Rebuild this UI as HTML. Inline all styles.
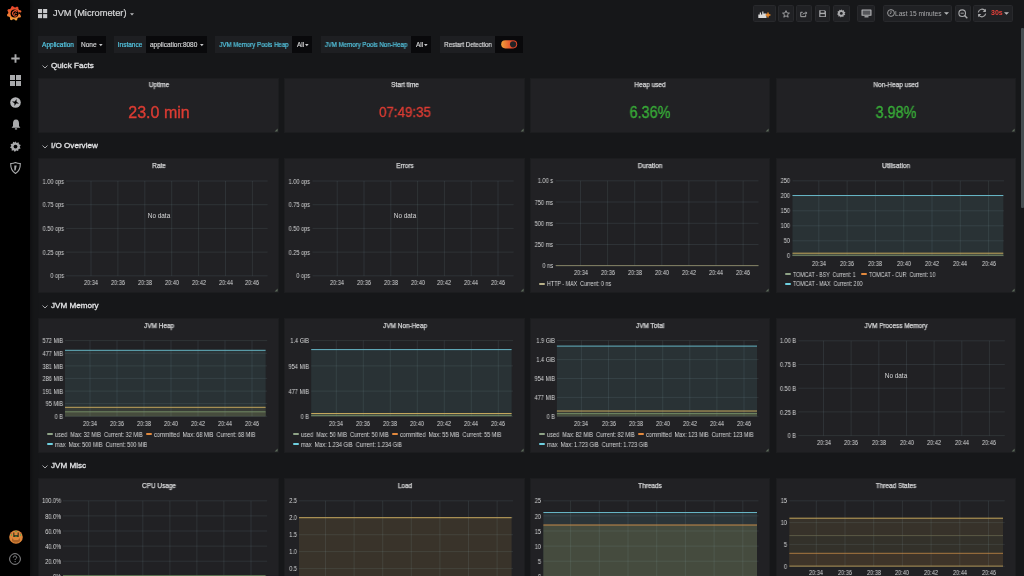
<!DOCTYPE html>
<html><head><meta charset="utf-8"><title>JVM (Micrometer)</title>
<style>
html,body{margin:0;padding:0;width:1024px;height:576px;overflow:hidden;background:#161719;font-family:"Liberation Sans",sans-serif;}
.t{position:absolute;white-space:nowrap;will-change:transform;}
.r{position:absolute;}
svg{position:absolute;overflow:visible;}
</style></head><body>
<div class="r" style="left:0px;top:0px;width:30px;height:576px;background:#000;box-shadow:0 0 6px rgba(0,0,0,0.6);z-index:2;"></div><svg style="left:0;top:0;z-index:3" width="30" height="30" viewBox="0 0 30 30">
<defs><linearGradient id="lg" x1="0" y1="0" x2="0" y2="1"><stop offset="0" stop-color="#e53e2b"/><stop offset="0.45" stop-color="#ee6a30"/><stop offset="1" stop-color="#f6a83f"/></linearGradient></defs>
<path fill="url(#lg)" d="M15.37,7.42 L17.03,6.46 L18.31,7.15 L18.44,9.06 L19.19,9.97 L21.04,10.47 L21.46,11.86 L20.20,13.30 L20.08,14.47 L21.04,16.13 L20.35,17.41 L18.44,17.54 L17.53,18.29 L17.03,20.14 L15.64,20.56 L14.20,19.30 L13.03,19.18 L11.37,20.14 L10.09,19.45 L9.96,17.54 L9.21,16.63 L7.36,16.13 L6.94,14.74 L8.20,13.30 L8.32,12.13 L7.36,10.47 L8.05,9.19 L9.96,9.06 L10.87,8.31 L11.37,6.46 L12.76,6.04 L14.20,7.30Z"/>
<circle cx="14.5" cy="13.5" r="3.9" fill="#000"/>
<path d="M18.7 12.100000000000001 L21.799999999999997 12.9 L18.4 14.5Z" fill="#000"/>
<path d="M17.2 11.700000000000001 A2.6 2.6 0 1 0 16.8 15.5" fill="none" stroke="#e8552e" stroke-width="1.1"/>
<path d="M16.599999999999998 13.9 A1.1 1.1 0 1 0 14.799999999999999 14.9" fill="none" stroke="#ec6a33" stroke-width="0.8"/>
</svg><svg style="left:10.5px;top:53.5px;z-index:3" width="9" height="9" viewBox="0 0 9 9"><path d="M4.5 0.3V8.7M0.3 4.5H8.7" stroke="#a9aaac" stroke-width="1.9"/></svg><svg style="left:10px;top:75px;z-index:3" width="11" height="11" viewBox="0 0 11 11"><rect x="0" y="0" width="5" height="5" fill="#a9aaac"/><rect x="6" y="0" width="5" height="5" fill="#a9aaac"/><rect x="0" y="6" width="5" height="5" fill="#a9aaac"/><rect x="6" y="6" width="5" height="5" fill="#a9aaac"/></svg><svg style="left:10px;top:96.7px;z-index:3" width="11" height="11" viewBox="0 0 11 11"><circle cx="5.5" cy="5.5" r="5.3" fill="#b4b5b7"/><path transform="rotate(15 5.5 5.5)" d="M5.5 1.8 L6.4 4.6 L9.2 5.5 L6.4 6.4 L5.5 9.2 L4.6 6.4 L1.8 5.5 L4.6 4.6Z" fill="#000"/></svg><svg style="left:10.5px;top:118.5px;z-index:3" width="10" height="11" viewBox="0 0 10 11"><path d="M5 0.5 C2.6 0.5 2 2.6 2 4.5 L2 7 L0.6 8.8 L9.4 8.8 L8 7 L8 4.5 C8 2.6 7.4 0.5 5 0.5Z" fill="#a9aaac"/><rect x="3.8" y="9.3" width="2.4" height="1.3" rx="0.6" fill="#a9aaac"/></svg><svg style="left:10px;top:140.8px;z-index:3" width="11" height="11" viewBox="0 0 11 11"><path d="M5.5 0.2 L6.6 1.9 L8.6 1.3 L8.9 3.3 L10.8 4.1 L9.7 5.8 L10.6 7.6 L8.6 8.1 L8.1 10.1 L6.2 9.5 L4.8 11 L3.7 9.3 L1.7 9.7 L1.7 7.6 L0 6.6 L1.3 5 L0.6 3.1 L2.6 2.7 L3.2 0.8 L5 1.5Z" fill="#a9aaac"/><circle cx="5.5" cy="5.6" r="1.9" fill="#000"/></svg><svg style="left:10px;top:162px;z-index:3" width="11" height="12" viewBox="0 0 11 12"><path d="M5.5 0.6 C3.6 1.4 2 1.6 0.7 1.5 C0.6 6.2 2 9.5 5.5 11.4 C9 9.5 10.4 6.2 10.3 1.5 C9 1.6 7.4 1.4 5.5 0.6Z" fill="none" stroke="#a9aaac" stroke-width="1.1"/><path d="M4.3 3.6 L6.7 3.6 L5.6 8.6 L4.3 8.6Z" fill="#a9aaac"/></svg><svg style="left:8.6px;top:530.2px;z-index:3" width="14" height="14" viewBox="0 0 14 14"><circle cx="7" cy="7" r="6.8" fill="#e0873a"/>
<path d="M4.2 2.5 L5.4 2.5 L5.4 5 L8.6 5 L8.6 2.5 L9.8 2.5 L9.8 7 L4.2 7Z" fill="#40371f"/><path d="M3 8 L5 10 L9 10 L11 8 L11 11 L9 12.4 L5 12.4 L3 11Z" fill="#8a4d1c" opacity="0.6"/>
<circle cx="7" cy="1.5" r="0.7" fill="#3fb050"/><circle cx="2.5" cy="5" r="0.7" fill="#3fb050"/><circle cx="11.5" cy="5" r="0.7" fill="#3fb050"/><circle cx="7" cy="6.2" r="0.7" fill="#3fb050"/><circle cx="2.5" cy="3" r="0.5" fill="#c04040"/><circle cx="11.5" cy="3" r="0.5" fill="#c04040"/></svg><svg style="left:9.4px;top:553.4px;z-index:3" width="12" height="12" viewBox="0 0 12 12"><circle cx="6" cy="6" r="5.4" fill="none" stroke="#9a9b9d" stroke-width="0.9"/><path d="M4.3 4.6 C4.3 3.5 5 3 6 3 C7 3 7.7 3.6 7.7 4.4 C7.7 5.5 6.1 5.6 6.1 7" fill="none" stroke="#9a9b9d" stroke-width="0.9"/><circle cx="6.1" cy="8.6" r="0.55" fill="#9a9b9d"/></svg><svg style="left:38px;top:8.6px" width="9.2" height="9.2" viewBox="0 0 9.2 9.2"><rect x="0" y="0" width="4.1" height="4.1" fill="#c9cacc"/><rect x="5.1" y="0" width="4.1" height="4.1" fill="#c9cacc"/><rect x="0" y="5.1" width="4.1" height="4.1" fill="#c9cacc"/><rect x="5.1" y="5.1" width="4.1" height="4.1" fill="#c9cacc"/></svg><div class="t" style="left:52.50px;top:8.05px;font-size:9.25px;line-height:11.10px;color:#d8d9da;font-weight:normal;-webkit-text-stroke:0.2px #d8d9da;">JVM (Micrometer)</div><svg style="left:129.5px;top:13px" width="4" height="3" viewBox="0 0 4 3"><path d="M0 0.3 L4 0.3 L2 2.6Z" fill="#b7b8ba"/></svg><div class="r" style="left:752.5px;top:5px;width:23.100000000000023px;height:16.5px;background:#202124;border:1px solid #28292c;box-sizing:border-box;border-radius:1.5px;"></div><svg style="left:757.5px;top:10px" width="13" height="8" viewBox="0 0 13 8"><path d="M0.3 8 L0.3 4.5 L1.8 4.5 L1.8 2.6 L3 2.6 L3 4.5 L4.2 4.5 L4.2 1.6 L5.4 1.6 L5.4 3.6 L8.5 3.6 L8.5 8Z" fill="#d8d8d8"/><path d="M10 2.6 V7.4 M7.6 5 H12.4" stroke="#f08c2a" stroke-width="1.4"/></svg><div class="r" style="left:777.8px;top:5px;width:16.100000000000023px;height:16.5px;background:#202124;border:1px solid #28292c;box-sizing:border-box;border-radius:1.5px;"></div><svg style="left:781.6px;top:9.6px" width="8" height="8" viewBox="0 0 10 10"><path d="M5 0.8 L6.2 3.7 L9.3 3.9 L6.9 5.9 L7.7 9 L5 7.3 L2.3 9 L3.1 5.9 L0.7 3.9 L3.8 3.7Z" fill="none" stroke="#a9aaac" stroke-width="1.1"/></svg><div class="r" style="left:796px;top:5px;width:16px;height:16.5px;background:#202124;border:1px solid #28292c;box-sizing:border-box;border-radius:1.5px;"></div><svg style="left:800px;top:9.8px" width="7.6" height="7.6" viewBox="0 0 10 10"><path d="M7.5 6 L7.5 8.8 L1 8.8 L1 3 L3.5 3" fill="none" stroke="#a9aaac" stroke-width="1.3"/><path d="M3.2 7 C3.5 4.5 5 3.3 7.5 3.3 L7.5 1.5 L9.6 3.8 L7.5 6 L7.5 4.6 C5.6 4.6 4.3 5.5 3.2 7Z" fill="#a9aaac"/></svg><div class="r" style="left:814.6px;top:5px;width:15.799999999999955px;height:16.5px;background:#202124;border:1px solid #28292c;box-sizing:border-box;border-radius:1.5px;"></div><svg style="left:818.9px;top:10px" width="7.2" height="7.2" viewBox="0 0 9 9"><path d="M0.3 0.3 H7.3 L8.7 1.7 V8.7 H0.3Z" fill="#a9aaac"/><rect x="2" y="1" width="4.8" height="2.4" fill="#202124"/><rect x="1.7" y="5.2" width="5.6" height="2.6" fill="#202124"/></svg><div class="r" style="left:832.5px;top:5px;width:17.200000000000045px;height:16.5px;background:#202124;border:1px solid #28292c;box-sizing:border-box;border-radius:1.5px;"></div><svg style="left:836.8px;top:9.3px" width="8.6" height="8.6" viewBox="0 0 11 11"><path d="M5.5 0.2 L6.6 1.9 L8.6 1.3 L8.9 3.3 L10.8 4.1 L9.7 5.8 L10.6 7.6 L8.6 8.1 L8.1 10.1 L6.2 9.5 L4.8 11 L3.7 9.3 L1.7 9.7 L1.7 7.6 L0 6.6 L1.3 5 L0.6 3.1 L2.6 2.7 L3.2 0.8 L5 1.5Z" fill="#a9aaac"/><circle cx="5.5" cy="5.6" r="1.8" fill="#202124"/></svg><div class="r" style="left:857px;top:5px;width:18px;height:16.5px;background:#202124;border:1px solid #28292c;box-sizing:border-box;border-radius:1.5px;"></div><svg style="left:860.5px;top:8.5px" width="11" height="9" viewBox="0 0 11 9"><rect x="0.5" y="0.5" width="10" height="6.3" rx="0.6" fill="#b5b6b8"/><rect x="1.6" y="1.5" width="7.8" height="4.3" fill="#55565a"/><rect x="3.5" y="7.2" width="4" height="1.2" fill="#b5b6b8"/></svg><div class="r" style="left:882.6px;top:5px;width:69.69999999999993px;height:16.5px;background:#202124;border:1px solid #28292c;box-sizing:border-box;border-radius:1.5px;"></div><svg style="left:886.5px;top:8.8px" width="8" height="8" viewBox="0 0 8 8"><circle cx="4" cy="4" r="3.4" fill="none" stroke="#a9aaac" stroke-width="0.9"/><path d="M4 1.8 V4.2 L2.6 5" fill="none" stroke="#a9aaac" stroke-width="0.8"/></svg><div class="t" style="left:894.50px;top:9.64px;font-size:6.6px;line-height:7.92px;color:#a9aaac;font-weight:normal;">Last 15 minutes</div><svg style="left:943.5px;top:12.3px" width="5" height="3" viewBox="0 0 5 3"><path d="M0 0.2 L5 0.2 L2.5 2.8Z" fill="#b7b8ba"/></svg><div class="r" style="left:954.5px;top:5px;width:16.5px;height:16.5px;background:#202124;border:1px solid #28292c;box-sizing:border-box;border-radius:1.5px;"></div><svg style="left:958px;top:8.5px" width="10" height="10" viewBox="0 0 10 10"><circle cx="4.2" cy="4.2" r="3.3" fill="none" stroke="#a9aaac" stroke-width="1.1"/><path d="M6.6 6.6 L9.3 9.3" stroke="#a9aaac" stroke-width="1.4"/><path d="M2.6 4.2 H5.8" stroke="#a9aaac" stroke-width="0.9"/></svg><div class="r" style="left:973.2px;top:5px;width:39.799999999999955px;height:16.5px;background:#202124;border:1px solid #28292c;box-sizing:border-box;border-radius:1.5px;"></div><svg style="left:977px;top:8.3px" width="10" height="10" viewBox="0 0 10 10"><path d="M1.3 4.3 A3.8 3.8 0 0 1 8.3 3" fill="none" stroke="#a9aaac" stroke-width="1.1"/><path d="M8.9 0.8 V4 H5.7Z" fill="#a9aaac"/><path d="M8.7 5.7 A3.8 3.8 0 0 1 1.7 7" fill="none" stroke="#a9aaac" stroke-width="1.1"/><path d="M1.1 9.2 V6 H4.3Z" fill="#a9aaac"/></svg><div class="t" style="left:990.50px;top:9.40px;font-size:7px;line-height:8.40px;color:#e8413a;font-weight:bold;">30s</div><svg style="left:1003.5px;top:12.3px" width="5" height="3" viewBox="0 0 5 3"><path d="M0 0.2 L5 0.2 L2.5 2.8Z" fill="#b7b8ba"/></svg><div class="r" style="left:1021px;top:28.3px;width:3px;height:180px;background:#454d50;border-radius:1px;"></div><div class="r" style="left:37.9px;top:36.2px;width:39.199999999999996px;height:16.7px;background:#1e1f22;"></div><div class="t" style="left:57.50px;top:40.70px;font-size:6.5px;line-height:7.80px;color:#55c8e4;font-weight:normal;transform:translateX(-50%) scaleX(1.0);transform-origin:center center;-webkit-text-stroke:0.2px #55c8e4;">Application</div><div class="r" style="left:77.1px;top:36.2px;width:28.900000000000006px;height:16.7px;background:#09090b;"></div><div class="t" style="left:81.30px;top:41.30px;font-size:6.5px;line-height:7.80px;color:#d8d9da;font-weight:normal;-webkit-text-stroke:0.15px #d8d9da;">None</div><svg style="left:98.8px;top:43.5px" width="3.6" height="2.4" viewBox="0 0 4 2.6"><path d="M0 0 L4 0 L2 2.5Z" fill="#c8c9cb"/></svg><div class="r" style="left:113.5px;top:36.2px;width:32.5px;height:16.7px;background:#1e1f22;"></div><div class="t" style="left:129.75px;top:40.70px;font-size:6.5px;line-height:7.80px;color:#55c8e4;font-weight:normal;transform:translateX(-50%) scaleX(1.0);transform-origin:center center;-webkit-text-stroke:0.2px #55c8e4;">Instance</div><div class="r" style="left:146px;top:36.2px;width:60.69999999999999px;height:16.7px;background:#09090b;"></div><div class="t" style="left:150.20px;top:41.30px;font-size:6.5px;line-height:7.80px;color:#d8d9da;font-weight:normal;-webkit-text-stroke:0.15px #d8d9da;">application:8080</div><svg style="left:199.5px;top:43.5px" width="3.6" height="2.4" viewBox="0 0 4 2.6"><path d="M0 0 L4 0 L2 2.5Z" fill="#c8c9cb"/></svg><div class="r" style="left:215px;top:36.2px;width:77.30000000000001px;height:16.7px;background:#1e1f22;"></div><div class="t" style="left:253.65px;top:40.70px;font-size:6.5px;line-height:7.80px;color:#55c8e4;font-weight:normal;transform:translateX(-50%) scaleX(0.94);transform-origin:center center;-webkit-text-stroke:0.2px #55c8e4;">JVM Memory Pools Heap</div><div class="r" style="left:292.3px;top:36.2px;width:20.19999999999999px;height:16.7px;background:#09090b;"></div><div class="t" style="left:296.50px;top:41.30px;font-size:6.5px;line-height:7.80px;color:#d8d9da;font-weight:normal;-webkit-text-stroke:0.15px #d8d9da;">All</div><svg style="left:305.3px;top:43.5px" width="3.6" height="2.4" viewBox="0 0 4 2.6"><path d="M0 0 L4 0 L2 2.5Z" fill="#c8c9cb"/></svg><div class="r" style="left:321.3px;top:36.2px;width:90.0px;height:16.7px;background:#1e1f22;"></div><div class="t" style="left:366.30px;top:40.70px;font-size:6.5px;line-height:7.80px;color:#55c8e4;font-weight:normal;transform:translateX(-50%) scaleX(0.94);transform-origin:center center;-webkit-text-stroke:0.2px #55c8e4;">JVM Memory Pools Non-Heap</div><div class="r" style="left:411.3px;top:36.2px;width:20.19999999999999px;height:16.7px;background:#09090b;"></div><div class="t" style="left:415.50px;top:41.30px;font-size:6.5px;line-height:7.80px;color:#d8d9da;font-weight:normal;-webkit-text-stroke:0.15px #d8d9da;">All</div><svg style="left:424.3px;top:43.5px" width="3.6" height="2.4" viewBox="0 0 4 2.6"><path d="M0 0 L4 0 L2 2.5Z" fill="#c8c9cb"/></svg><div class="r" style="left:440.3px;top:36.2px;width:54.89999999999998px;height:16.7px;background:#1e1f22;"></div><div class="t" style="left:467.75px;top:40.70px;font-size:6.5px;line-height:7.80px;color:#d8d9da;font-weight:normal;transform:translateX(-50%) scaleX(0.95);transform-origin:center center;-webkit-text-stroke:0.2px #d8d9da;">Restart Detection</div><div class="r" style="left:495.2px;top:36.2px;width:27.400000000000034px;height:16.7px;background:#09090b;"></div><svg style="left:500.8px;top:40.2px" width="16.4" height="8.6" viewBox="0 0 16.4 8.6"><defs><linearGradient id="tg" x1="0" y1="0" x2="1" y2="0"><stop offset="0" stop-color="#f0a03a"/><stop offset="0.7" stop-color="#e2452a"/></linearGradient></defs><rect x="0.2" y="0.2" width="16" height="8.2" rx="4.1" fill="url(#tg)"/><circle cx="12.1" cy="4.3" r="3.1" fill="#222326"/></svg><svg style="left:42px;top:64.5px" width="6" height="4" viewBox="0 0 6 4"><path d="M0.5 0.5 L3 3 L5.5 0.5" fill="none" stroke="#b7b8ba" stroke-width="0.9"/></svg><div class="t" style="left:51.00px;top:61.14px;font-size:8.1px;line-height:9.72px;color:#e3e4e6;font-weight:normal;-webkit-text-stroke:0.3px #e3e4e6;">Quick Facts</div><svg style="left:42px;top:144.5px" width="6" height="4" viewBox="0 0 6 4"><path d="M0.5 0.5 L3 3 L5.5 0.5" fill="none" stroke="#b7b8ba" stroke-width="0.9"/></svg><div class="t" style="left:51.00px;top:141.14px;font-size:8.1px;line-height:9.72px;color:#e3e4e6;font-weight:normal;-webkit-text-stroke:0.3px #e3e4e6;">I/O Overview</div><svg style="left:42px;top:304.5px" width="6" height="4" viewBox="0 0 6 4"><path d="M0.5 0.5 L3 3 L5.5 0.5" fill="none" stroke="#b7b8ba" stroke-width="0.9"/></svg><div class="t" style="left:51.00px;top:301.14px;font-size:8.1px;line-height:9.72px;color:#e3e4e6;font-weight:normal;-webkit-text-stroke:0.3px #e3e4e6;">JVM Memory</div><svg style="left:42px;top:464.5px" width="6" height="4" viewBox="0 0 6 4"><path d="M0.5 0.5 L3 3 L5.5 0.5" fill="none" stroke="#b7b8ba" stroke-width="0.9"/></svg><div class="t" style="left:51.00px;top:461.14px;font-size:8.1px;line-height:9.72px;color:#e3e4e6;font-weight:normal;-webkit-text-stroke:0.3px #e3e4e6;">JVM Misc</div><div class="r" style="left:38px;top:78px;width:241px;height:55px;background:#212124;box-sizing:border-box;border:1px solid #1c1d1f;"></div><svg style="left:274px;top:128px" width="4" height="4" viewBox="0 0 4 4"><path d="M3.6 0.6 L3.6 3.6 L0.6 3.6Z" fill="#5c6a5a"/></svg><div class="t" style="left:158.50px;top:81.42px;font-size:6.8px;line-height:8.16px;color:#d8d9da;font-weight:normal;transform:translateX(-50%) scaleX(0.95);transform-origin:center center;-webkit-text-stroke:0.25px #d8d9da;">Uptime</div><div class="t" style="left:158.50px;top:102.90px;font-size:16px;line-height:19.20px;color:#dc3c33;font-weight:normal;transform:translateX(-50%) scaleX(1.0);transform-origin:center center;-webkit-text-stroke:0.35px #dc3c33;">23.0 min</div><div class="r" style="left:284px;top:78px;width:241px;height:55px;background:#212124;box-sizing:border-box;border:1px solid #1c1d1f;"></div><svg style="left:520px;top:128px" width="4" height="4" viewBox="0 0 4 4"><path d="M3.6 0.6 L3.6 3.6 L0.6 3.6Z" fill="#5c6a5a"/></svg><div class="t" style="left:404.50px;top:81.42px;font-size:6.8px;line-height:8.16px;color:#d8d9da;font-weight:normal;transform:translateX(-50%) scaleX(0.95);transform-origin:center center;-webkit-text-stroke:0.25px #d8d9da;">Start time</div><div class="t" style="left:404.50px;top:104.10px;font-size:14px;line-height:16.80px;color:#dc3c33;font-weight:normal;transform:translateX(-50%) scaleX(0.95);transform-origin:center center;-webkit-text-stroke:0.35px #dc3c33;">07:49:35</div><div class="r" style="left:530px;top:78px;width:240px;height:55px;background:#212124;box-sizing:border-box;border:1px solid #1c1d1f;"></div><svg style="left:765px;top:128px" width="4" height="4" viewBox="0 0 4 4"><path d="M3.6 0.6 L3.6 3.6 L0.6 3.6Z" fill="#5c6a5a"/></svg><div class="t" style="left:650.00px;top:81.42px;font-size:6.8px;line-height:8.16px;color:#d8d9da;font-weight:normal;transform:translateX(-50%) scaleX(0.95);transform-origin:center center;-webkit-text-stroke:0.25px #d8d9da;">Heap used</div><div class="t" style="left:650.00px;top:102.90px;font-size:16px;line-height:19.20px;color:#38ac38;font-weight:normal;transform:translateX(-50%) scaleX(0.9);transform-origin:center center;-webkit-text-stroke:0.35px #38ac38;">6.36%</div><div class="r" style="left:776px;top:78px;width:240px;height:55px;background:#212124;box-sizing:border-box;border:1px solid #1c1d1f;"></div><svg style="left:1011px;top:128px" width="4" height="4" viewBox="0 0 4 4"><path d="M3.6 0.6 L3.6 3.6 L0.6 3.6Z" fill="#5c6a5a"/></svg><div class="t" style="left:896.00px;top:81.42px;font-size:6.8px;line-height:8.16px;color:#d8d9da;font-weight:normal;transform:translateX(-50%) scaleX(0.95);transform-origin:center center;-webkit-text-stroke:0.25px #d8d9da;">Non-Heap used</div><div class="t" style="left:896.00px;top:102.90px;font-size:16px;line-height:19.20px;color:#38ac38;font-weight:normal;transform:translateX(-50%) scaleX(0.9);transform-origin:center center;-webkit-text-stroke:0.35px #38ac38;">3.98%</div><div class="r" style="left:38px;top:158px;width:241px;height:135px;background:#212124;box-sizing:border-box;border:1px solid #1c1d1f;"></div><svg style="left:274px;top:288px" width="4" height="4" viewBox="0 0 4 4"><path d="M3.6 0.6 L3.6 3.6 L0.6 3.6Z" fill="#5c6a5a"/></svg><div class="t" style="left:158.50px;top:161.82px;font-size:6.8px;line-height:8.16px;color:#d8d9da;font-weight:normal;transform:translateX(-50%) scaleX(0.95);transform-origin:center center;-webkit-text-stroke:0.25px #d8d9da;">Rate</div><svg style="left:0;top:0" width="1024" height="576"><line x1="66" y1="181" x2="267.6" y2="181" stroke="rgba(170,205,215,0.13)" stroke-width="0.8"/><line x1="66" y1="204.7" x2="267.6" y2="204.7" stroke="rgba(170,205,215,0.13)" stroke-width="0.8"/><line x1="66" y1="228.4" x2="267.6" y2="228.4" stroke="rgba(170,205,215,0.13)" stroke-width="0.8"/><line x1="66" y1="252.1" x2="267.6" y2="252.1" stroke="rgba(170,205,215,0.13)" stroke-width="0.8"/><line x1="66" y1="275.8" x2="267.6" y2="275.8" stroke="rgba(170,205,215,0.13)" stroke-width="0.8"/><line x1="91.0" y1="181" x2="91.0" y2="275.8" stroke="rgba(170,205,215,0.13)" stroke-width="0.8"/><line x1="117.9" y1="181" x2="117.9" y2="275.8" stroke="rgba(170,205,215,0.13)" stroke-width="0.8"/><line x1="144.8" y1="181" x2="144.8" y2="275.8" stroke="rgba(170,205,215,0.13)" stroke-width="0.8"/><line x1="171.7" y1="181" x2="171.7" y2="275.8" stroke="rgba(170,205,215,0.13)" stroke-width="0.8"/><line x1="198.6" y1="181" x2="198.6" y2="275.8" stroke="rgba(170,205,215,0.13)" stroke-width="0.8"/><line x1="225.5" y1="181" x2="225.5" y2="275.8" stroke="rgba(170,205,215,0.13)" stroke-width="0.8"/><line x1="252.4" y1="181" x2="252.4" y2="275.8" stroke="rgba(170,205,215,0.13)" stroke-width="0.8"/></svg><div class="t" style="left:63.70px;top:177.66px;font-size:6.4px;line-height:7.68px;color:#d8d9da;font-weight:normal;transform:translateX(-100%) scaleX(0.87);transform-origin:right center;">1.00 ops</div><div class="t" style="left:63.70px;top:201.36px;font-size:6.4px;line-height:7.68px;color:#d8d9da;font-weight:normal;transform:translateX(-100%) scaleX(0.87);transform-origin:right center;">0.75 ops</div><div class="t" style="left:63.70px;top:225.06px;font-size:6.4px;line-height:7.68px;color:#d8d9da;font-weight:normal;transform:translateX(-100%) scaleX(0.87);transform-origin:right center;">0.50 ops</div><div class="t" style="left:63.70px;top:248.76px;font-size:6.4px;line-height:7.68px;color:#d8d9da;font-weight:normal;transform:translateX(-100%) scaleX(0.87);transform-origin:right center;">0.25 ops</div><div class="t" style="left:63.70px;top:272.46px;font-size:6.4px;line-height:7.68px;color:#d8d9da;font-weight:normal;transform:translateX(-100%) scaleX(0.87);transform-origin:right center;">0 ops</div><div class="t" style="left:91.00px;top:278.66px;font-size:6.4px;line-height:7.68px;color:#d8d9da;font-weight:normal;transform:translateX(-50%) scaleX(0.87);transform-origin:center center;">20:34</div><div class="t" style="left:117.90px;top:278.66px;font-size:6.4px;line-height:7.68px;color:#d8d9da;font-weight:normal;transform:translateX(-50%) scaleX(0.87);transform-origin:center center;">20:36</div><div class="t" style="left:144.80px;top:278.66px;font-size:6.4px;line-height:7.68px;color:#d8d9da;font-weight:normal;transform:translateX(-50%) scaleX(0.87);transform-origin:center center;">20:38</div><div class="t" style="left:171.70px;top:278.66px;font-size:6.4px;line-height:7.68px;color:#d8d9da;font-weight:normal;transform:translateX(-50%) scaleX(0.87);transform-origin:center center;">20:40</div><div class="t" style="left:198.60px;top:278.66px;font-size:6.4px;line-height:7.68px;color:#d8d9da;font-weight:normal;transform:translateX(-50%) scaleX(0.87);transform-origin:center center;">20:42</div><div class="t" style="left:225.50px;top:278.66px;font-size:6.4px;line-height:7.68px;color:#d8d9da;font-weight:normal;transform:translateX(-50%) scaleX(0.87);transform-origin:center center;">20:44</div><div class="t" style="left:252.40px;top:278.66px;font-size:6.4px;line-height:7.68px;color:#d8d9da;font-weight:normal;transform:translateX(-50%) scaleX(0.87);transform-origin:center center;">20:46</div><div class="t" style="left:158.60px;top:211.96px;font-size:6.4px;line-height:7.68px;color:#d8d9da;font-weight:normal;transform:translateX(-50%) scaleX(1.0);transform-origin:center center;">No data</div><div class="r" style="left:284px;top:158px;width:241px;height:135px;background:#212124;box-sizing:border-box;border:1px solid #1c1d1f;"></div><svg style="left:520px;top:288px" width="4" height="4" viewBox="0 0 4 4"><path d="M3.6 0.6 L3.6 3.6 L0.6 3.6Z" fill="#5c6a5a"/></svg><div class="t" style="left:404.50px;top:161.82px;font-size:6.8px;line-height:8.16px;color:#d8d9da;font-weight:normal;transform:translateX(-50%) scaleX(0.95);transform-origin:center center;-webkit-text-stroke:0.25px #d8d9da;">Errors</div><svg style="left:0;top:0" width="1024" height="576"><line x1="312.5" y1="181" x2="513.6" y2="181" stroke="rgba(170,205,215,0.13)" stroke-width="0.8"/><line x1="312.5" y1="204.7" x2="513.6" y2="204.7" stroke="rgba(170,205,215,0.13)" stroke-width="0.8"/><line x1="312.5" y1="228.4" x2="513.6" y2="228.4" stroke="rgba(170,205,215,0.13)" stroke-width="0.8"/><line x1="312.5" y1="252.1" x2="513.6" y2="252.1" stroke="rgba(170,205,215,0.13)" stroke-width="0.8"/><line x1="312.5" y1="275.8" x2="513.6" y2="275.8" stroke="rgba(170,205,215,0.13)" stroke-width="0.8"/><line x1="337.2" y1="181" x2="337.2" y2="275.8" stroke="rgba(170,205,215,0.13)" stroke-width="0.8"/><line x1="364.0" y1="181" x2="364.0" y2="275.8" stroke="rgba(170,205,215,0.13)" stroke-width="0.8"/><line x1="390.8" y1="181" x2="390.8" y2="275.8" stroke="rgba(170,205,215,0.13)" stroke-width="0.8"/><line x1="417.6" y1="181" x2="417.6" y2="275.8" stroke="rgba(170,205,215,0.13)" stroke-width="0.8"/><line x1="444.4" y1="181" x2="444.4" y2="275.8" stroke="rgba(170,205,215,0.13)" stroke-width="0.8"/><line x1="471.2" y1="181" x2="471.2" y2="275.8" stroke="rgba(170,205,215,0.13)" stroke-width="0.8"/><line x1="498.0" y1="181" x2="498.0" y2="275.8" stroke="rgba(170,205,215,0.13)" stroke-width="0.8"/></svg><div class="t" style="left:310.20px;top:177.66px;font-size:6.4px;line-height:7.68px;color:#d8d9da;font-weight:normal;transform:translateX(-100%) scaleX(0.87);transform-origin:right center;">1.00 ops</div><div class="t" style="left:310.20px;top:201.36px;font-size:6.4px;line-height:7.68px;color:#d8d9da;font-weight:normal;transform:translateX(-100%) scaleX(0.87);transform-origin:right center;">0.75 ops</div><div class="t" style="left:310.20px;top:225.06px;font-size:6.4px;line-height:7.68px;color:#d8d9da;font-weight:normal;transform:translateX(-100%) scaleX(0.87);transform-origin:right center;">0.50 ops</div><div class="t" style="left:310.20px;top:248.76px;font-size:6.4px;line-height:7.68px;color:#d8d9da;font-weight:normal;transform:translateX(-100%) scaleX(0.87);transform-origin:right center;">0.25 ops</div><div class="t" style="left:310.20px;top:272.46px;font-size:6.4px;line-height:7.68px;color:#d8d9da;font-weight:normal;transform:translateX(-100%) scaleX(0.87);transform-origin:right center;">0 ops</div><div class="t" style="left:337.20px;top:278.66px;font-size:6.4px;line-height:7.68px;color:#d8d9da;font-weight:normal;transform:translateX(-50%) scaleX(0.87);transform-origin:center center;">20:34</div><div class="t" style="left:364.00px;top:278.66px;font-size:6.4px;line-height:7.68px;color:#d8d9da;font-weight:normal;transform:translateX(-50%) scaleX(0.87);transform-origin:center center;">20:36</div><div class="t" style="left:390.80px;top:278.66px;font-size:6.4px;line-height:7.68px;color:#d8d9da;font-weight:normal;transform:translateX(-50%) scaleX(0.87);transform-origin:center center;">20:38</div><div class="t" style="left:417.60px;top:278.66px;font-size:6.4px;line-height:7.68px;color:#d8d9da;font-weight:normal;transform:translateX(-50%) scaleX(0.87);transform-origin:center center;">20:40</div><div class="t" style="left:444.40px;top:278.66px;font-size:6.4px;line-height:7.68px;color:#d8d9da;font-weight:normal;transform:translateX(-50%) scaleX(0.87);transform-origin:center center;">20:42</div><div class="t" style="left:471.20px;top:278.66px;font-size:6.4px;line-height:7.68px;color:#d8d9da;font-weight:normal;transform:translateX(-50%) scaleX(0.87);transform-origin:center center;">20:44</div><div class="t" style="left:498.00px;top:278.66px;font-size:6.4px;line-height:7.68px;color:#d8d9da;font-weight:normal;transform:translateX(-50%) scaleX(0.87);transform-origin:center center;">20:46</div><div class="t" style="left:404.50px;top:211.76px;font-size:6.4px;line-height:7.68px;color:#d8d9da;font-weight:normal;transform:translateX(-50%) scaleX(1.0);transform-origin:center center;">No data</div><div class="r" style="left:530px;top:158px;width:240px;height:135px;background:#212124;box-sizing:border-box;border:1px solid #1c1d1f;"></div><svg style="left:765px;top:288px" width="4" height="4" viewBox="0 0 4 4"><path d="M3.6 0.6 L3.6 3.6 L0.6 3.6Z" fill="#5c6a5a"/></svg><div class="t" style="left:650.00px;top:161.82px;font-size:6.8px;line-height:8.16px;color:#d8d9da;font-weight:normal;transform:translateX(-50%) scaleX(0.95);transform-origin:center center;-webkit-text-stroke:0.25px #d8d9da;">Duration</div><svg style="left:0;top:0" width="1024" height="576"><line x1="555.7" y1="180.8" x2="758.5" y2="180.8" stroke="rgba(170,205,215,0.13)" stroke-width="0.8"/><line x1="555.7" y1="202" x2="758.5" y2="202" stroke="rgba(170,205,215,0.13)" stroke-width="0.8"/><line x1="555.7" y1="223.3" x2="758.5" y2="223.3" stroke="rgba(170,205,215,0.13)" stroke-width="0.8"/><line x1="555.7" y1="244.5" x2="758.5" y2="244.5" stroke="rgba(170,205,215,0.13)" stroke-width="0.8"/><line x1="555.7" y1="265.8" x2="758.5" y2="265.8" stroke="rgba(170,205,215,0.13)" stroke-width="0.8"/><line x1="580.5" y1="180.8" x2="580.5" y2="265.8" stroke="rgba(170,205,215,0.13)" stroke-width="0.8"/><line x1="607.6" y1="180.8" x2="607.6" y2="265.8" stroke="rgba(170,205,215,0.13)" stroke-width="0.8"/><line x1="634.7" y1="180.8" x2="634.7" y2="265.8" stroke="rgba(170,205,215,0.13)" stroke-width="0.8"/><line x1="661.8" y1="180.8" x2="661.8" y2="265.8" stroke="rgba(170,205,215,0.13)" stroke-width="0.8"/><line x1="688.9" y1="180.8" x2="688.9" y2="265.8" stroke="rgba(170,205,215,0.13)" stroke-width="0.8"/><line x1="716.0" y1="180.8" x2="716.0" y2="265.8" stroke="rgba(170,205,215,0.13)" stroke-width="0.8"/><line x1="743.1" y1="180.8" x2="743.1" y2="265.8" stroke="rgba(170,205,215,0.13)" stroke-width="0.8"/><line x1="555.7" y1="265.6" x2="758.5" y2="265.6" stroke="#8f8c6c" stroke-width="0.9"/></svg><div class="t" style="left:553.40px;top:177.46px;font-size:6.4px;line-height:7.68px;color:#d8d9da;font-weight:normal;transform:translateX(-100%) scaleX(0.87);transform-origin:right center;">1.00 s</div><div class="t" style="left:553.40px;top:198.66px;font-size:6.4px;line-height:7.68px;color:#d8d9da;font-weight:normal;transform:translateX(-100%) scaleX(0.87);transform-origin:right center;">750 ms</div><div class="t" style="left:553.40px;top:219.96px;font-size:6.4px;line-height:7.68px;color:#d8d9da;font-weight:normal;transform:translateX(-100%) scaleX(0.87);transform-origin:right center;">500 ms</div><div class="t" style="left:553.40px;top:241.16px;font-size:6.4px;line-height:7.68px;color:#d8d9da;font-weight:normal;transform:translateX(-100%) scaleX(0.87);transform-origin:right center;">250 ms</div><div class="t" style="left:553.40px;top:262.46px;font-size:6.4px;line-height:7.68px;color:#d8d9da;font-weight:normal;transform:translateX(-100%) scaleX(0.87);transform-origin:right center;">0 ns</div><div class="t" style="left:580.50px;top:268.96px;font-size:6.4px;line-height:7.68px;color:#d8d9da;font-weight:normal;transform:translateX(-50%) scaleX(0.87);transform-origin:center center;">20:34</div><div class="t" style="left:607.60px;top:268.96px;font-size:6.4px;line-height:7.68px;color:#d8d9da;font-weight:normal;transform:translateX(-50%) scaleX(0.87);transform-origin:center center;">20:36</div><div class="t" style="left:634.70px;top:268.96px;font-size:6.4px;line-height:7.68px;color:#d8d9da;font-weight:normal;transform:translateX(-50%) scaleX(0.87);transform-origin:center center;">20:38</div><div class="t" style="left:661.80px;top:268.96px;font-size:6.4px;line-height:7.68px;color:#d8d9da;font-weight:normal;transform:translateX(-50%) scaleX(0.87);transform-origin:center center;">20:40</div><div class="t" style="left:688.90px;top:268.96px;font-size:6.4px;line-height:7.68px;color:#d8d9da;font-weight:normal;transform:translateX(-50%) scaleX(0.87);transform-origin:center center;">20:42</div><div class="t" style="left:716.00px;top:268.96px;font-size:6.4px;line-height:7.68px;color:#d8d9da;font-weight:normal;transform:translateX(-50%) scaleX(0.87);transform-origin:center center;">20:44</div><div class="t" style="left:743.10px;top:268.96px;font-size:6.4px;line-height:7.68px;color:#d8d9da;font-weight:normal;transform:translateX(-50%) scaleX(0.87);transform-origin:center center;">20:46</div><div class="r" style="left:539px;top:282.8px;width:6px;height:2px;background:#b8b088;border-radius:1px;"></div><div class="t" style="left:547.00px;top:280.32px;font-size:6.3px;line-height:7.56px;color:#d8d9da;font-weight:normal;transform:translateX(0) scaleX(0.85);transform-origin:left center;">HTTP - MAX&nbsp; Current: 0 ns</div><div class="r" style="left:776px;top:158px;width:240px;height:135px;background:#212124;box-sizing:border-box;border:1px solid #1c1d1f;"></div><svg style="left:1011px;top:288px" width="4" height="4" viewBox="0 0 4 4"><path d="M3.6 0.6 L3.6 3.6 L0.6 3.6Z" fill="#5c6a5a"/></svg><div class="t" style="left:896.00px;top:161.82px;font-size:6.8px;line-height:8.16px;color:#d8d9da;font-weight:normal;transform:translateX(-50%) scaleX(0.95);transform-origin:center center;-webkit-text-stroke:0.25px #d8d9da;">Utilisation</div><svg style="left:0;top:0" width="1024" height="576"><rect x="792.5" y="195.5" width="210.79999999999995" height="60.30000000000001" fill="#293235"/><rect x="792.5" y="253.3" width="210.79999999999995" height="2.5" fill="#3c4237"/><rect x="792.5" y="255.2" width="210.79999999999995" height="0.6000000000000227" fill="#434a3d"/><line x1="792.5" y1="180.8" x2="1004" y2="180.8" stroke="rgba(170,205,215,0.13)" stroke-width="0.8"/><line x1="792.5" y1="195.8" x2="1004" y2="195.8" stroke="rgba(170,205,215,0.13)" stroke-width="0.8"/><line x1="792.5" y1="210.8" x2="1004" y2="210.8" stroke="rgba(170,205,215,0.13)" stroke-width="0.8"/><line x1="792.5" y1="225.8" x2="1004" y2="225.8" stroke="rgba(170,205,215,0.13)" stroke-width="0.8"/><line x1="792.5" y1="240.8" x2="1004" y2="240.8" stroke="rgba(170,205,215,0.13)" stroke-width="0.8"/><line x1="792.5" y1="255.8" x2="1004" y2="255.8" stroke="rgba(170,205,215,0.13)" stroke-width="0.8"/><line x1="818.8" y1="180.8" x2="818.8" y2="255.8" stroke="rgba(170,205,215,0.13)" stroke-width="0.8"/><line x1="847.1" y1="180.8" x2="847.1" y2="255.8" stroke="rgba(170,205,215,0.13)" stroke-width="0.8"/><line x1="875.4" y1="180.8" x2="875.4" y2="255.8" stroke="rgba(170,205,215,0.13)" stroke-width="0.8"/><line x1="903.7" y1="180.8" x2="903.7" y2="255.8" stroke="rgba(170,205,215,0.13)" stroke-width="0.8"/><line x1="932.0" y1="180.8" x2="932.0" y2="255.8" stroke="rgba(170,205,215,0.13)" stroke-width="0.8"/><line x1="960.3" y1="180.8" x2="960.3" y2="255.8" stroke="rgba(170,205,215,0.13)" stroke-width="0.8"/><line x1="988.6" y1="180.8" x2="988.6" y2="255.8" stroke="rgba(170,205,215,0.13)" stroke-width="0.8"/><line x1="792.5" y1="195.5" x2="1003.3" y2="195.5" stroke="#66b4c4" stroke-width="1.0"/><line x1="792.5" y1="253.2" x2="1003.3" y2="253.2" stroke="#c4a65c" stroke-width="1.0"/><line x1="792.5" y1="255.4" x2="1003.3" y2="255.4" stroke="#66765c" stroke-width="1.2"/></svg><div class="t" style="left:790.20px;top:177.46px;font-size:6.4px;line-height:7.68px;color:#d8d9da;font-weight:normal;transform:translateX(-100%) scaleX(0.87);transform-origin:right center;">250</div><div class="t" style="left:790.20px;top:192.46px;font-size:6.4px;line-height:7.68px;color:#d8d9da;font-weight:normal;transform:translateX(-100%) scaleX(0.87);transform-origin:right center;">200</div><div class="t" style="left:790.20px;top:207.46px;font-size:6.4px;line-height:7.68px;color:#d8d9da;font-weight:normal;transform:translateX(-100%) scaleX(0.87);transform-origin:right center;">150</div><div class="t" style="left:790.20px;top:222.46px;font-size:6.4px;line-height:7.68px;color:#d8d9da;font-weight:normal;transform:translateX(-100%) scaleX(0.87);transform-origin:right center;">100</div><div class="t" style="left:790.20px;top:237.46px;font-size:6.4px;line-height:7.68px;color:#d8d9da;font-weight:normal;transform:translateX(-100%) scaleX(0.87);transform-origin:right center;">50</div><div class="t" style="left:790.20px;top:252.46px;font-size:6.4px;line-height:7.68px;color:#d8d9da;font-weight:normal;transform:translateX(-100%) scaleX(0.87);transform-origin:right center;">0</div><div class="t" style="left:818.80px;top:259.56px;font-size:6.4px;line-height:7.68px;color:#d8d9da;font-weight:normal;transform:translateX(-50%) scaleX(0.87);transform-origin:center center;">20:34</div><div class="t" style="left:847.10px;top:259.56px;font-size:6.4px;line-height:7.68px;color:#d8d9da;font-weight:normal;transform:translateX(-50%) scaleX(0.87);transform-origin:center center;">20:36</div><div class="t" style="left:875.40px;top:259.56px;font-size:6.4px;line-height:7.68px;color:#d8d9da;font-weight:normal;transform:translateX(-50%) scaleX(0.87);transform-origin:center center;">20:38</div><div class="t" style="left:903.70px;top:259.56px;font-size:6.4px;line-height:7.68px;color:#d8d9da;font-weight:normal;transform:translateX(-50%) scaleX(0.87);transform-origin:center center;">20:40</div><div class="t" style="left:932.00px;top:259.56px;font-size:6.4px;line-height:7.68px;color:#d8d9da;font-weight:normal;transform:translateX(-50%) scaleX(0.87);transform-origin:center center;">20:42</div><div class="t" style="left:960.30px;top:259.56px;font-size:6.4px;line-height:7.68px;color:#d8d9da;font-weight:normal;transform:translateX(-50%) scaleX(0.87);transform-origin:center center;">20:44</div><div class="t" style="left:988.60px;top:259.56px;font-size:6.4px;line-height:7.68px;color:#d8d9da;font-weight:normal;transform:translateX(-50%) scaleX(0.87);transform-origin:center center;">20:46</div><div class="r" style="left:785px;top:273.4px;width:6px;height:2px;background:#8fa386;border-radius:1px;"></div><div class="t" style="left:793.00px;top:270.92px;font-size:6.3px;line-height:7.56px;color:#d8d9da;font-weight:normal;transform:translateX(0) scaleX(0.83);transform-origin:left center;">TOMCAT - BSY&nbsp; Current: 1</div><div class="r" style="left:861px;top:273.4px;width:6px;height:2px;background:#e3893d;border-radius:1px;"></div><div class="t" style="left:869.00px;top:270.92px;font-size:6.3px;line-height:7.56px;color:#d8d9da;font-weight:normal;transform:translateX(0) scaleX(0.83);transform-origin:left center;">TOMCAT - CUR&nbsp; Current: 10</div><div class="r" style="left:785px;top:282.8px;width:6px;height:2px;background:#6ed0e0;border-radius:1px;"></div><div class="t" style="left:793.00px;top:280.32px;font-size:6.3px;line-height:7.56px;color:#d8d9da;font-weight:normal;transform:translateX(0) scaleX(0.83);transform-origin:left center;">TOMCAT - MAX&nbsp; Current: 200</div><div class="r" style="left:38px;top:318px;width:241px;height:135px;background:#212124;box-sizing:border-box;border:1px solid #1c1d1f;"></div><svg style="left:274px;top:448px" width="4" height="4" viewBox="0 0 4 4"><path d="M3.6 0.6 L3.6 3.6 L0.6 3.6Z" fill="#5c6a5a"/></svg><div class="t" style="left:158.50px;top:321.82px;font-size:6.8px;line-height:8.16px;color:#d8d9da;font-weight:normal;transform:translateX(-50%) scaleX(0.95);transform-origin:center center;-webkit-text-stroke:0.25px #d8d9da;">JVM Heap</div><svg style="left:0;top:0" width="1024" height="576"><rect x="65" y="350.3" width="200.60000000000002" height="66.0" fill="#293235"/><rect x="65" y="407.3" width="200.60000000000002" height="9.0" fill="#393d36"/><rect x="65" y="411.8" width="200.60000000000002" height="4.5" fill="#464c3d"/><line x1="65" y1="340.6" x2="267.2" y2="340.6" stroke="rgba(170,205,215,0.13)" stroke-width="0.8"/><line x1="65" y1="353.2" x2="267.2" y2="353.2" stroke="rgba(170,205,215,0.13)" stroke-width="0.8"/><line x1="65" y1="365.9" x2="267.2" y2="365.9" stroke="rgba(170,205,215,0.13)" stroke-width="0.8"/><line x1="65" y1="378.4" x2="267.2" y2="378.4" stroke="rgba(170,205,215,0.13)" stroke-width="0.8"/><line x1="65" y1="391.1" x2="267.2" y2="391.1" stroke="rgba(170,205,215,0.13)" stroke-width="0.8"/><line x1="65" y1="403.6" x2="267.2" y2="403.6" stroke="rgba(170,205,215,0.13)" stroke-width="0.8"/><line x1="65" y1="416.3" x2="267.2" y2="416.3" stroke="rgba(170,205,215,0.13)" stroke-width="0.8"/><line x1="90.0" y1="340.6" x2="90.0" y2="416.3" stroke="rgba(170,205,215,0.13)" stroke-width="0.8"/><line x1="117.0" y1="340.6" x2="117.0" y2="416.3" stroke="rgba(170,205,215,0.13)" stroke-width="0.8"/><line x1="144.0" y1="340.6" x2="144.0" y2="416.3" stroke="rgba(170,205,215,0.13)" stroke-width="0.8"/><line x1="171.0" y1="340.6" x2="171.0" y2="416.3" stroke="rgba(170,205,215,0.13)" stroke-width="0.8"/><line x1="198.0" y1="340.6" x2="198.0" y2="416.3" stroke="rgba(170,205,215,0.13)" stroke-width="0.8"/><line x1="225.0" y1="340.6" x2="225.0" y2="416.3" stroke="rgba(170,205,215,0.13)" stroke-width="0.8"/><line x1="252.0" y1="340.6" x2="252.0" y2="416.3" stroke="rgba(170,205,215,0.13)" stroke-width="0.8"/><line x1="65" y1="350.3" x2="265.6" y2="350.3" stroke="#66b4c4" stroke-width="1.0"/><line x1="65" y1="407.3" x2="265.6" y2="407.3" stroke="#c4a65c" stroke-width="1.0"/><line x1="65" y1="411.8" x2="265.6" y2="411.8" stroke="#7d9a6e" stroke-width="0.8"/></svg><div class="t" style="left:62.70px;top:337.26px;font-size:6.4px;line-height:7.68px;color:#d8d9da;font-weight:normal;transform:translateX(-100%) scaleX(0.87);transform-origin:right center;">572 MiB</div><div class="t" style="left:62.70px;top:349.86px;font-size:6.4px;line-height:7.68px;color:#d8d9da;font-weight:normal;transform:translateX(-100%) scaleX(0.87);transform-origin:right center;">477 MiB</div><div class="t" style="left:62.70px;top:362.56px;font-size:6.4px;line-height:7.68px;color:#d8d9da;font-weight:normal;transform:translateX(-100%) scaleX(0.87);transform-origin:right center;">381 MiB</div><div class="t" style="left:62.70px;top:375.06px;font-size:6.4px;line-height:7.68px;color:#d8d9da;font-weight:normal;transform:translateX(-100%) scaleX(0.87);transform-origin:right center;">286 MiB</div><div class="t" style="left:62.70px;top:387.76px;font-size:6.4px;line-height:7.68px;color:#d8d9da;font-weight:normal;transform:translateX(-100%) scaleX(0.87);transform-origin:right center;">191 MiB</div><div class="t" style="left:62.70px;top:400.26px;font-size:6.4px;line-height:7.68px;color:#d8d9da;font-weight:normal;transform:translateX(-100%) scaleX(0.87);transform-origin:right center;">95 MiB</div><div class="t" style="left:62.70px;top:412.96px;font-size:6.4px;line-height:7.68px;color:#d8d9da;font-weight:normal;transform:translateX(-100%) scaleX(0.87);transform-origin:right center;">0 B</div><div class="t" style="left:90.00px;top:419.56px;font-size:6.4px;line-height:7.68px;color:#d8d9da;font-weight:normal;transform:translateX(-50%) scaleX(0.87);transform-origin:center center;">20:34</div><div class="t" style="left:117.00px;top:419.56px;font-size:6.4px;line-height:7.68px;color:#d8d9da;font-weight:normal;transform:translateX(-50%) scaleX(0.87);transform-origin:center center;">20:36</div><div class="t" style="left:144.00px;top:419.56px;font-size:6.4px;line-height:7.68px;color:#d8d9da;font-weight:normal;transform:translateX(-50%) scaleX(0.87);transform-origin:center center;">20:38</div><div class="t" style="left:171.00px;top:419.56px;font-size:6.4px;line-height:7.68px;color:#d8d9da;font-weight:normal;transform:translateX(-50%) scaleX(0.87);transform-origin:center center;">20:40</div><div class="t" style="left:198.00px;top:419.56px;font-size:6.4px;line-height:7.68px;color:#d8d9da;font-weight:normal;transform:translateX(-50%) scaleX(0.87);transform-origin:center center;">20:42</div><div class="t" style="left:225.00px;top:419.56px;font-size:6.4px;line-height:7.68px;color:#d8d9da;font-weight:normal;transform:translateX(-50%) scaleX(0.87);transform-origin:center center;">20:44</div><div class="t" style="left:252.00px;top:419.56px;font-size:6.4px;line-height:7.68px;color:#d8d9da;font-weight:normal;transform:translateX(-50%) scaleX(0.87);transform-origin:center center;">20:46</div><div class="r" style="left:47px;top:433.4px;width:6px;height:2px;background:#8fa386;border-radius:1px;"></div><div class="t" style="left:55.00px;top:430.92px;font-size:6.3px;line-height:7.56px;color:#d8d9da;font-weight:normal;transform:translateX(0) scaleX(0.88);transform-origin:left center;">used&nbsp; Max: 32 MiB&nbsp; Current: 32 MiB</div><div class="r" style="left:146.4px;top:433.4px;width:6px;height:2px;background:#e3893d;border-radius:1px;"></div><div class="t" style="left:154.40px;top:430.92px;font-size:6.3px;line-height:7.56px;color:#d8d9da;font-weight:normal;transform:translateX(0) scaleX(0.88);transform-origin:left center;">committed&nbsp; Max: 68 MiB&nbsp; Current: 68 MiB</div><div class="r" style="left:47px;top:443px;width:6px;height:2px;background:#6ed0e0;border-radius:1px;"></div><div class="t" style="left:55.00px;top:440.52px;font-size:6.3px;line-height:7.56px;color:#d8d9da;font-weight:normal;transform:translateX(0) scaleX(0.88);transform-origin:left center;">max&nbsp; Max: 500 MiB&nbsp; Current: 500 MiB</div><div class="r" style="left:284px;top:318px;width:241px;height:135px;background:#212124;box-sizing:border-box;border:1px solid #1c1d1f;"></div><svg style="left:520px;top:448px" width="4" height="4" viewBox="0 0 4 4"><path d="M3.6 0.6 L3.6 3.6 L0.6 3.6Z" fill="#5c6a5a"/></svg><div class="t" style="left:404.50px;top:321.82px;font-size:6.8px;line-height:8.16px;color:#d8d9da;font-weight:normal;transform:translateX(-50%) scaleX(0.95);transform-origin:center center;-webkit-text-stroke:0.25px #d8d9da;">JVM Non-Heap</div><svg style="left:0;top:0" width="1024" height="576"><rect x="311.2" y="349.6" width="200.40000000000003" height="66.69999999999999" fill="#293235"/><rect x="311.2" y="413.4" width="200.40000000000003" height="2.900000000000034" fill="#393d36"/><rect x="311.2" y="415" width="200.40000000000003" height="1.3000000000000114" fill="#464c3d"/><line x1="311.2" y1="340.6" x2="513.1" y2="340.6" stroke="rgba(170,205,215,0.13)" stroke-width="0.8"/><line x1="311.2" y1="365.9" x2="513.1" y2="365.9" stroke="rgba(170,205,215,0.13)" stroke-width="0.8"/><line x1="311.2" y1="391.1" x2="513.1" y2="391.1" stroke="rgba(170,205,215,0.13)" stroke-width="0.8"/><line x1="311.2" y1="416.3" x2="513.1" y2="416.3" stroke="rgba(170,205,215,0.13)" stroke-width="0.8"/><line x1="336.3" y1="340.6" x2="336.3" y2="416.3" stroke="rgba(170,205,215,0.13)" stroke-width="0.8"/><line x1="363.3" y1="340.6" x2="363.3" y2="416.3" stroke="rgba(170,205,215,0.13)" stroke-width="0.8"/><line x1="390.3" y1="340.6" x2="390.3" y2="416.3" stroke="rgba(170,205,215,0.13)" stroke-width="0.8"/><line x1="417.3" y1="340.6" x2="417.3" y2="416.3" stroke="rgba(170,205,215,0.13)" stroke-width="0.8"/><line x1="444.3" y1="340.6" x2="444.3" y2="416.3" stroke="rgba(170,205,215,0.13)" stroke-width="0.8"/><line x1="471.3" y1="340.6" x2="471.3" y2="416.3" stroke="rgba(170,205,215,0.13)" stroke-width="0.8"/><line x1="498.3" y1="340.6" x2="498.3" y2="416.3" stroke="rgba(170,205,215,0.13)" stroke-width="0.8"/><line x1="311.2" y1="349.6" x2="511.6" y2="349.6" stroke="#66b4c4" stroke-width="1.0"/><line x1="311.2" y1="413.5" x2="511.6" y2="413.5" stroke="#c4a65c" stroke-width="1.0"/><line x1="311.2" y1="415.3" x2="511.6" y2="415.3" stroke="#7d9a6e" stroke-width="0.8"/></svg><div class="t" style="left:308.90px;top:337.26px;font-size:6.4px;line-height:7.68px;color:#d8d9da;font-weight:normal;transform:translateX(-100%) scaleX(0.87);transform-origin:right center;">1.4 GiB</div><div class="t" style="left:308.90px;top:362.56px;font-size:6.4px;line-height:7.68px;color:#d8d9da;font-weight:normal;transform:translateX(-100%) scaleX(0.87);transform-origin:right center;">954 MiB</div><div class="t" style="left:308.90px;top:387.76px;font-size:6.4px;line-height:7.68px;color:#d8d9da;font-weight:normal;transform:translateX(-100%) scaleX(0.87);transform-origin:right center;">477 MiB</div><div class="t" style="left:308.90px;top:412.96px;font-size:6.4px;line-height:7.68px;color:#d8d9da;font-weight:normal;transform:translateX(-100%) scaleX(0.87);transform-origin:right center;">0 B</div><div class="t" style="left:336.30px;top:419.56px;font-size:6.4px;line-height:7.68px;color:#d8d9da;font-weight:normal;transform:translateX(-50%) scaleX(0.87);transform-origin:center center;">20:34</div><div class="t" style="left:363.30px;top:419.56px;font-size:6.4px;line-height:7.68px;color:#d8d9da;font-weight:normal;transform:translateX(-50%) scaleX(0.87);transform-origin:center center;">20:36</div><div class="t" style="left:390.30px;top:419.56px;font-size:6.4px;line-height:7.68px;color:#d8d9da;font-weight:normal;transform:translateX(-50%) scaleX(0.87);transform-origin:center center;">20:38</div><div class="t" style="left:417.30px;top:419.56px;font-size:6.4px;line-height:7.68px;color:#d8d9da;font-weight:normal;transform:translateX(-50%) scaleX(0.87);transform-origin:center center;">20:40</div><div class="t" style="left:444.30px;top:419.56px;font-size:6.4px;line-height:7.68px;color:#d8d9da;font-weight:normal;transform:translateX(-50%) scaleX(0.87);transform-origin:center center;">20:42</div><div class="t" style="left:471.30px;top:419.56px;font-size:6.4px;line-height:7.68px;color:#d8d9da;font-weight:normal;transform:translateX(-50%) scaleX(0.87);transform-origin:center center;">20:44</div><div class="t" style="left:498.30px;top:419.56px;font-size:6.4px;line-height:7.68px;color:#d8d9da;font-weight:normal;transform:translateX(-50%) scaleX(0.87);transform-origin:center center;">20:46</div><div class="r" style="left:293px;top:433.4px;width:6px;height:2px;background:#8fa386;border-radius:1px;"></div><div class="t" style="left:301.00px;top:430.92px;font-size:6.3px;line-height:7.56px;color:#d8d9da;font-weight:normal;transform:translateX(0) scaleX(0.88);transform-origin:left center;">used&nbsp; Max: 50 MiB&nbsp; Current: 50 MiB</div><div class="r" style="left:392.4px;top:433.4px;width:6px;height:2px;background:#e3893d;border-radius:1px;"></div><div class="t" style="left:400.40px;top:430.92px;font-size:6.3px;line-height:7.56px;color:#d8d9da;font-weight:normal;transform:translateX(0) scaleX(0.88);transform-origin:left center;">committed&nbsp; Max: 55 MiB&nbsp; Current: 55 MiB</div><div class="r" style="left:293px;top:443px;width:6px;height:2px;background:#6ed0e0;border-radius:1px;"></div><div class="t" style="left:301.00px;top:440.52px;font-size:6.3px;line-height:7.56px;color:#d8d9da;font-weight:normal;transform:translateX(0) scaleX(0.88);transform-origin:left center;">max&nbsp; Max: 1.234 GiB&nbsp; Current: 1.234 GiB</div><div class="r" style="left:530px;top:318px;width:240px;height:135px;background:#212124;box-sizing:border-box;border:1px solid #1c1d1f;"></div><svg style="left:765px;top:448px" width="4" height="4" viewBox="0 0 4 4"><path d="M3.6 0.6 L3.6 3.6 L0.6 3.6Z" fill="#5c6a5a"/></svg><div class="t" style="left:650.00px;top:321.82px;font-size:6.8px;line-height:8.16px;color:#d8d9da;font-weight:normal;transform:translateX(-50%) scaleX(0.95);transform-origin:center center;-webkit-text-stroke:0.25px #d8d9da;">JVM Total</div><svg style="left:0;top:0" width="1024" height="576"><rect x="556.9" y="346.1" width="200.10000000000002" height="70.19999999999999" fill="#293235"/><rect x="556.9" y="411" width="200.10000000000002" height="5.300000000000011" fill="#393d36"/><rect x="556.9" y="413.4" width="200.10000000000002" height="2.900000000000034" fill="#464c3d"/><line x1="556.9" y1="340.6" x2="758.5" y2="340.6" stroke="rgba(170,205,215,0.13)" stroke-width="0.8"/><line x1="556.9" y1="359.6" x2="758.5" y2="359.6" stroke="rgba(170,205,215,0.13)" stroke-width="0.8"/><line x1="556.9" y1="378.5" x2="758.5" y2="378.5" stroke="rgba(170,205,215,0.13)" stroke-width="0.8"/><line x1="556.9" y1="397.4" x2="758.5" y2="397.4" stroke="rgba(170,205,215,0.13)" stroke-width="0.8"/><line x1="556.9" y1="416.3" x2="758.5" y2="416.3" stroke="rgba(170,205,215,0.13)" stroke-width="0.8"/><line x1="581.4" y1="340.6" x2="581.4" y2="416.3" stroke="rgba(170,205,215,0.13)" stroke-width="0.8"/><line x1="608.5" y1="340.6" x2="608.5" y2="416.3" stroke="rgba(170,205,215,0.13)" stroke-width="0.8"/><line x1="635.6" y1="340.6" x2="635.6" y2="416.3" stroke="rgba(170,205,215,0.13)" stroke-width="0.8"/><line x1="662.7" y1="340.6" x2="662.7" y2="416.3" stroke="rgba(170,205,215,0.13)" stroke-width="0.8"/><line x1="689.8" y1="340.6" x2="689.8" y2="416.3" stroke="rgba(170,205,215,0.13)" stroke-width="0.8"/><line x1="716.9" y1="340.6" x2="716.9" y2="416.3" stroke="rgba(170,205,215,0.13)" stroke-width="0.8"/><line x1="744.0" y1="340.6" x2="744.0" y2="416.3" stroke="rgba(170,205,215,0.13)" stroke-width="0.8"/><line x1="556.9" y1="346.1" x2="757" y2="346.1" stroke="#66b4c4" stroke-width="1.0"/><line x1="556.9" y1="411" x2="757" y2="411" stroke="#c4a65c" stroke-width="1.0"/><line x1="556.9" y1="413.6" x2="757" y2="413.6" stroke="#7d9a6e" stroke-width="0.8"/></svg><div class="t" style="left:554.60px;top:337.26px;font-size:6.4px;line-height:7.68px;color:#d8d9da;font-weight:normal;transform:translateX(-100%) scaleX(0.87);transform-origin:right center;">1.9 GiB</div><div class="t" style="left:554.60px;top:356.26px;font-size:6.4px;line-height:7.68px;color:#d8d9da;font-weight:normal;transform:translateX(-100%) scaleX(0.87);transform-origin:right center;">1.4 GiB</div><div class="t" style="left:554.60px;top:375.16px;font-size:6.4px;line-height:7.68px;color:#d8d9da;font-weight:normal;transform:translateX(-100%) scaleX(0.87);transform-origin:right center;">954 MiB</div><div class="t" style="left:554.60px;top:394.06px;font-size:6.4px;line-height:7.68px;color:#d8d9da;font-weight:normal;transform:translateX(-100%) scaleX(0.87);transform-origin:right center;">477 MiB</div><div class="t" style="left:554.60px;top:412.96px;font-size:6.4px;line-height:7.68px;color:#d8d9da;font-weight:normal;transform:translateX(-100%) scaleX(0.87);transform-origin:right center;">0 B</div><div class="t" style="left:581.40px;top:419.56px;font-size:6.4px;line-height:7.68px;color:#d8d9da;font-weight:normal;transform:translateX(-50%) scaleX(0.87);transform-origin:center center;">20:34</div><div class="t" style="left:608.50px;top:419.56px;font-size:6.4px;line-height:7.68px;color:#d8d9da;font-weight:normal;transform:translateX(-50%) scaleX(0.87);transform-origin:center center;">20:36</div><div class="t" style="left:635.60px;top:419.56px;font-size:6.4px;line-height:7.68px;color:#d8d9da;font-weight:normal;transform:translateX(-50%) scaleX(0.87);transform-origin:center center;">20:38</div><div class="t" style="left:662.70px;top:419.56px;font-size:6.4px;line-height:7.68px;color:#d8d9da;font-weight:normal;transform:translateX(-50%) scaleX(0.87);transform-origin:center center;">20:40</div><div class="t" style="left:689.80px;top:419.56px;font-size:6.4px;line-height:7.68px;color:#d8d9da;font-weight:normal;transform:translateX(-50%) scaleX(0.87);transform-origin:center center;">20:42</div><div class="t" style="left:716.90px;top:419.56px;font-size:6.4px;line-height:7.68px;color:#d8d9da;font-weight:normal;transform:translateX(-50%) scaleX(0.87);transform-origin:center center;">20:44</div><div class="t" style="left:744.00px;top:419.56px;font-size:6.4px;line-height:7.68px;color:#d8d9da;font-weight:normal;transform:translateX(-50%) scaleX(0.87);transform-origin:center center;">20:46</div><div class="r" style="left:539px;top:433.4px;width:6px;height:2px;background:#8fa386;border-radius:1px;"></div><div class="t" style="left:547.00px;top:430.92px;font-size:6.3px;line-height:7.56px;color:#d8d9da;font-weight:normal;transform:translateX(0) scaleX(0.88);transform-origin:left center;">used&nbsp; Max: 82 MiB&nbsp; Current: 82 MiB</div><div class="r" style="left:638px;top:433.4px;width:6px;height:2px;background:#e3893d;border-radius:1px;"></div><div class="t" style="left:646.00px;top:430.92px;font-size:6.3px;line-height:7.56px;color:#d8d9da;font-weight:normal;transform:translateX(0) scaleX(0.88);transform-origin:left center;">committed&nbsp; Max: 123 MiB&nbsp; Current: 123 MiB</div><div class="r" style="left:539px;top:443px;width:6px;height:2px;background:#6ed0e0;border-radius:1px;"></div><div class="t" style="left:547.00px;top:440.52px;font-size:6.3px;line-height:7.56px;color:#d8d9da;font-weight:normal;transform:translateX(0) scaleX(0.88);transform-origin:left center;">max&nbsp; Max: 1.723 GiB&nbsp; Current: 1.723 GiB</div><div class="r" style="left:776px;top:318px;width:240px;height:135px;background:#212124;box-sizing:border-box;border:1px solid #1c1d1f;"></div><svg style="left:1011px;top:448px" width="4" height="4" viewBox="0 0 4 4"><path d="M3.6 0.6 L3.6 3.6 L0.6 3.6Z" fill="#5c6a5a"/></svg><div class="t" style="left:896.00px;top:321.82px;font-size:6.8px;line-height:8.16px;color:#d8d9da;font-weight:normal;transform:translateX(-50%) scaleX(0.95);transform-origin:center center;-webkit-text-stroke:0.25px #d8d9da;">JVM Process Memory</div><svg style="left:0;top:0" width="1024" height="576"><line x1="798.4" y1="340.8" x2="1004.8" y2="340.8" stroke="rgba(170,205,215,0.13)" stroke-width="0.8"/><line x1="798.4" y1="364.5" x2="1004.8" y2="364.5" stroke="rgba(170,205,215,0.13)" stroke-width="0.8"/><line x1="798.4" y1="388.2" x2="1004.8" y2="388.2" stroke="rgba(170,205,215,0.13)" stroke-width="0.8"/><line x1="798.4" y1="411.9" x2="1004.8" y2="411.9" stroke="rgba(170,205,215,0.13)" stroke-width="0.8"/><line x1="798.4" y1="435.6" x2="1004.8" y2="435.6" stroke="rgba(170,205,215,0.13)" stroke-width="0.8"/><line x1="823.5" y1="340.8" x2="823.5" y2="435.6" stroke="rgba(170,205,215,0.13)" stroke-width="0.8"/><line x1="851.1" y1="340.8" x2="851.1" y2="435.6" stroke="rgba(170,205,215,0.13)" stroke-width="0.8"/><line x1="878.8" y1="340.8" x2="878.8" y2="435.6" stroke="rgba(170,205,215,0.13)" stroke-width="0.8"/><line x1="906.5" y1="340.8" x2="906.5" y2="435.6" stroke="rgba(170,205,215,0.13)" stroke-width="0.8"/><line x1="934.1" y1="340.8" x2="934.1" y2="435.6" stroke="rgba(170,205,215,0.13)" stroke-width="0.8"/><line x1="961.8" y1="340.8" x2="961.8" y2="435.6" stroke="rgba(170,205,215,0.13)" stroke-width="0.8"/><line x1="989.4" y1="340.8" x2="989.4" y2="435.6" stroke="rgba(170,205,215,0.13)" stroke-width="0.8"/></svg><div class="t" style="left:796.10px;top:337.46px;font-size:6.4px;line-height:7.68px;color:#d8d9da;font-weight:normal;transform:translateX(-100%) scaleX(0.87);transform-origin:right center;">1.00 B</div><div class="t" style="left:796.10px;top:361.16px;font-size:6.4px;line-height:7.68px;color:#d8d9da;font-weight:normal;transform:translateX(-100%) scaleX(0.87);transform-origin:right center;">0.75 B</div><div class="t" style="left:796.10px;top:384.86px;font-size:6.4px;line-height:7.68px;color:#d8d9da;font-weight:normal;transform:translateX(-100%) scaleX(0.87);transform-origin:right center;">0.50 B</div><div class="t" style="left:796.10px;top:408.56px;font-size:6.4px;line-height:7.68px;color:#d8d9da;font-weight:normal;transform:translateX(-100%) scaleX(0.87);transform-origin:right center;">0.25 B</div><div class="t" style="left:796.10px;top:432.26px;font-size:6.4px;line-height:7.68px;color:#d8d9da;font-weight:normal;transform:translateX(-100%) scaleX(0.87);transform-origin:right center;">0 B</div><div class="t" style="left:823.50px;top:438.66px;font-size:6.4px;line-height:7.68px;color:#d8d9da;font-weight:normal;transform:translateX(-50%) scaleX(0.87);transform-origin:center center;">20:34</div><div class="t" style="left:851.10px;top:438.66px;font-size:6.4px;line-height:7.68px;color:#d8d9da;font-weight:normal;transform:translateX(-50%) scaleX(0.87);transform-origin:center center;">20:36</div><div class="t" style="left:878.80px;top:438.66px;font-size:6.4px;line-height:7.68px;color:#d8d9da;font-weight:normal;transform:translateX(-50%) scaleX(0.87);transform-origin:center center;">20:38</div><div class="t" style="left:906.50px;top:438.66px;font-size:6.4px;line-height:7.68px;color:#d8d9da;font-weight:normal;transform:translateX(-50%) scaleX(0.87);transform-origin:center center;">20:40</div><div class="t" style="left:934.10px;top:438.66px;font-size:6.4px;line-height:7.68px;color:#d8d9da;font-weight:normal;transform:translateX(-50%) scaleX(0.87);transform-origin:center center;">20:42</div><div class="t" style="left:961.80px;top:438.66px;font-size:6.4px;line-height:7.68px;color:#d8d9da;font-weight:normal;transform:translateX(-50%) scaleX(0.87);transform-origin:center center;">20:44</div><div class="t" style="left:989.40px;top:438.66px;font-size:6.4px;line-height:7.68px;color:#d8d9da;font-weight:normal;transform:translateX(-50%) scaleX(0.87);transform-origin:center center;">20:46</div><div class="t" style="left:895.80px;top:372.36px;font-size:6.4px;line-height:7.68px;color:#d8d9da;font-weight:normal;transform:translateX(-50%) scaleX(1.0);transform-origin:center center;">No data</div><div class="r" style="left:38px;top:478px;width:241px;height:112px;background:#212124;box-sizing:border-box;border:1px solid #1c1d1f;"></div><div class="t" style="left:158.50px;top:481.82px;font-size:6.8px;line-height:8.16px;color:#d8d9da;font-weight:normal;transform:translateX(-50%) scaleX(0.95);transform-origin:center center;-webkit-text-stroke:0.25px #d8d9da;">CPU Usage</div><svg style="left:0;top:0" width="1024" height="576"><line x1="63" y1="500.8" x2="267.2" y2="500.8" stroke="rgba(170,205,215,0.13)" stroke-width="0.8"/><line x1="63" y1="515.9" x2="267.2" y2="515.9" stroke="rgba(170,205,215,0.13)" stroke-width="0.8"/><line x1="63" y1="531" x2="267.2" y2="531" stroke="rgba(170,205,215,0.13)" stroke-width="0.8"/><line x1="63" y1="546.1" x2="267.2" y2="546.1" stroke="rgba(170,205,215,0.13)" stroke-width="0.8"/><line x1="63" y1="561.2" x2="267.2" y2="561.2" stroke="rgba(170,205,215,0.13)" stroke-width="0.8"/><line x1="63" y1="576.3" x2="267.2" y2="576.3" stroke="rgba(170,205,215,0.13)" stroke-width="0.8"/><line x1="88.7" y1="500.8" x2="88.7" y2="576.3" stroke="rgba(170,205,215,0.13)" stroke-width="0.8"/><line x1="115.8" y1="500.8" x2="115.8" y2="576.3" stroke="rgba(170,205,215,0.13)" stroke-width="0.8"/><line x1="142.8" y1="500.8" x2="142.8" y2="576.3" stroke="rgba(170,205,215,0.13)" stroke-width="0.8"/><line x1="169.9" y1="500.8" x2="169.9" y2="576.3" stroke="rgba(170,205,215,0.13)" stroke-width="0.8"/><line x1="196.9" y1="500.8" x2="196.9" y2="576.3" stroke="rgba(170,205,215,0.13)" stroke-width="0.8"/><line x1="223.9" y1="500.8" x2="223.9" y2="576.3" stroke="rgba(170,205,215,0.13)" stroke-width="0.8"/><line x1="251.0" y1="500.8" x2="251.0" y2="576.3" stroke="rgba(170,205,215,0.13)" stroke-width="0.8"/><line x1="63" y1="575.8" x2="265.6" y2="575.8" stroke="#6d8a5e" stroke-width="1.2"/></svg><div class="t" style="left:60.70px;top:497.46px;font-size:6.4px;line-height:7.68px;color:#d8d9da;font-weight:normal;transform:translateX(-100%) scaleX(0.87);transform-origin:right center;">100.0%</div><div class="t" style="left:60.70px;top:512.56px;font-size:6.4px;line-height:7.68px;color:#d8d9da;font-weight:normal;transform:translateX(-100%) scaleX(0.87);transform-origin:right center;">80.0%</div><div class="t" style="left:60.70px;top:527.66px;font-size:6.4px;line-height:7.68px;color:#d8d9da;font-weight:normal;transform:translateX(-100%) scaleX(0.87);transform-origin:right center;">60.0%</div><div class="t" style="left:60.70px;top:542.76px;font-size:6.4px;line-height:7.68px;color:#d8d9da;font-weight:normal;transform:translateX(-100%) scaleX(0.87);transform-origin:right center;">40.0%</div><div class="t" style="left:60.70px;top:557.86px;font-size:6.4px;line-height:7.68px;color:#d8d9da;font-weight:normal;transform:translateX(-100%) scaleX(0.87);transform-origin:right center;">20.0%</div><div class="t" style="left:60.70px;top:572.96px;font-size:6.4px;line-height:7.68px;color:#d8d9da;font-weight:normal;transform:translateX(-100%) scaleX(0.87);transform-origin:right center;">0%</div><div class="t" style="left:88.70px;top:579.66px;font-size:6.4px;line-height:7.68px;color:#d8d9da;font-weight:normal;transform:translateX(-50%) scaleX(0.87);transform-origin:center center;">20:34</div><div class="t" style="left:115.80px;top:579.66px;font-size:6.4px;line-height:7.68px;color:#d8d9da;font-weight:normal;transform:translateX(-50%) scaleX(0.87);transform-origin:center center;">20:36</div><div class="t" style="left:142.80px;top:579.66px;font-size:6.4px;line-height:7.68px;color:#d8d9da;font-weight:normal;transform:translateX(-50%) scaleX(0.87);transform-origin:center center;">20:38</div><div class="t" style="left:169.90px;top:579.66px;font-size:6.4px;line-height:7.68px;color:#d8d9da;font-weight:normal;transform:translateX(-50%) scaleX(0.87);transform-origin:center center;">20:40</div><div class="t" style="left:196.90px;top:579.66px;font-size:6.4px;line-height:7.68px;color:#d8d9da;font-weight:normal;transform:translateX(-50%) scaleX(0.87);transform-origin:center center;">20:42</div><div class="t" style="left:223.90px;top:579.66px;font-size:6.4px;line-height:7.68px;color:#d8d9da;font-weight:normal;transform:translateX(-50%) scaleX(0.87);transform-origin:center center;">20:44</div><div class="t" style="left:251.00px;top:579.66px;font-size:6.4px;line-height:7.68px;color:#d8d9da;font-weight:normal;transform:translateX(-50%) scaleX(0.87);transform-origin:center center;">20:46</div><div class="r" style="left:284px;top:478px;width:241px;height:112px;background:#212124;box-sizing:border-box;border:1px solid #1c1d1f;"></div><div class="t" style="left:404.50px;top:481.82px;font-size:6.8px;line-height:8.16px;color:#d8d9da;font-weight:normal;transform:translateX(-50%) scaleX(0.95);transform-origin:center center;-webkit-text-stroke:0.25px #d8d9da;">Load</div><svg style="left:0;top:0" width="1024" height="576"><rect x="299" y="517.7" width="212.60000000000002" height="67.89999999999998" fill="#39332a"/><line x1="299" y1="500.8" x2="513.1" y2="500.8" stroke="rgba(170,205,215,0.13)" stroke-width="0.8"/><line x1="299" y1="517.7" x2="513.1" y2="517.7" stroke="rgba(170,205,215,0.13)" stroke-width="0.8"/><line x1="299" y1="534.7" x2="513.1" y2="534.7" stroke="rgba(170,205,215,0.13)" stroke-width="0.8"/><line x1="299" y1="551.6" x2="513.1" y2="551.6" stroke="rgba(170,205,215,0.13)" stroke-width="0.8"/><line x1="299" y1="568.6" x2="513.1" y2="568.6" stroke="rgba(170,205,215,0.13)" stroke-width="0.8"/><line x1="299" y1="585.6" x2="513.1" y2="585.6" stroke="rgba(170,205,215,0.13)" stroke-width="0.8"/><line x1="325.5" y1="500.8" x2="325.5" y2="585.6" stroke="rgba(170,205,215,0.13)" stroke-width="0.8"/><line x1="354.1" y1="500.8" x2="354.1" y2="585.6" stroke="rgba(170,205,215,0.13)" stroke-width="0.8"/><line x1="382.7" y1="500.8" x2="382.7" y2="585.6" stroke="rgba(170,205,215,0.13)" stroke-width="0.8"/><line x1="411.3" y1="500.8" x2="411.3" y2="585.6" stroke="rgba(170,205,215,0.13)" stroke-width="0.8"/><line x1="439.9" y1="500.8" x2="439.9" y2="585.6" stroke="rgba(170,205,215,0.13)" stroke-width="0.8"/><line x1="468.5" y1="500.8" x2="468.5" y2="585.6" stroke="rgba(170,205,215,0.13)" stroke-width="0.8"/><line x1="497.1" y1="500.8" x2="497.1" y2="585.6" stroke="rgba(170,205,215,0.13)" stroke-width="0.8"/><line x1="299" y1="517.7" x2="511.6" y2="517.7" stroke="#c4a65c" stroke-width="1.0"/></svg><div class="t" style="left:296.70px;top:497.46px;font-size:6.4px;line-height:7.68px;color:#d8d9da;font-weight:normal;transform:translateX(-100%) scaleX(0.87);transform-origin:right center;">2.5</div><div class="t" style="left:296.70px;top:514.36px;font-size:6.4px;line-height:7.68px;color:#d8d9da;font-weight:normal;transform:translateX(-100%) scaleX(0.87);transform-origin:right center;">2.0</div><div class="t" style="left:296.70px;top:531.36px;font-size:6.4px;line-height:7.68px;color:#d8d9da;font-weight:normal;transform:translateX(-100%) scaleX(0.87);transform-origin:right center;">1.5</div><div class="t" style="left:296.70px;top:548.26px;font-size:6.4px;line-height:7.68px;color:#d8d9da;font-weight:normal;transform:translateX(-100%) scaleX(0.87);transform-origin:right center;">1.0</div><div class="t" style="left:296.70px;top:565.26px;font-size:6.4px;line-height:7.68px;color:#d8d9da;font-weight:normal;transform:translateX(-100%) scaleX(0.87);transform-origin:right center;">0.5</div><div class="t" style="left:296.70px;top:582.26px;font-size:6.4px;line-height:7.68px;color:#d8d9da;font-weight:normal;transform:translateX(-100%) scaleX(0.87);transform-origin:right center;">0</div><div class="t" style="left:325.50px;top:588.66px;font-size:6.4px;line-height:7.68px;color:#d8d9da;font-weight:normal;transform:translateX(-50%) scaleX(0.87);transform-origin:center center;">20:34</div><div class="t" style="left:354.10px;top:588.66px;font-size:6.4px;line-height:7.68px;color:#d8d9da;font-weight:normal;transform:translateX(-50%) scaleX(0.87);transform-origin:center center;">20:36</div><div class="t" style="left:382.70px;top:588.66px;font-size:6.4px;line-height:7.68px;color:#d8d9da;font-weight:normal;transform:translateX(-50%) scaleX(0.87);transform-origin:center center;">20:38</div><div class="t" style="left:411.30px;top:588.66px;font-size:6.4px;line-height:7.68px;color:#d8d9da;font-weight:normal;transform:translateX(-50%) scaleX(0.87);transform-origin:center center;">20:40</div><div class="t" style="left:439.90px;top:588.66px;font-size:6.4px;line-height:7.68px;color:#d8d9da;font-weight:normal;transform:translateX(-50%) scaleX(0.87);transform-origin:center center;">20:42</div><div class="t" style="left:468.50px;top:588.66px;font-size:6.4px;line-height:7.68px;color:#d8d9da;font-weight:normal;transform:translateX(-50%) scaleX(0.87);transform-origin:center center;">20:44</div><div class="t" style="left:497.10px;top:588.66px;font-size:6.4px;line-height:7.68px;color:#d8d9da;font-weight:normal;transform:translateX(-50%) scaleX(0.87);transform-origin:center center;">20:46</div><div class="r" style="left:530px;top:478px;width:240px;height:112px;background:#212124;box-sizing:border-box;border:1px solid #1c1d1f;"></div><div class="t" style="left:650.00px;top:481.82px;font-size:6.8px;line-height:8.16px;color:#d8d9da;font-weight:normal;transform:translateX(-50%) scaleX(0.95);transform-origin:center center;-webkit-text-stroke:0.25px #d8d9da;">Threads</div><svg style="left:0;top:0" width="1024" height="576"><rect x="543.4" y="512.5" width="213.60000000000002" height="63.799999999999955" fill="#2b3438"/><rect x="543.4" y="525" width="213.60000000000002" height="51.299999999999955" fill="#454b3e"/><line x1="543.4" y1="500.8" x2="758.5" y2="500.8" stroke="rgba(170,205,215,0.13)" stroke-width="0.8"/><line x1="543.4" y1="515.9" x2="758.5" y2="515.9" stroke="rgba(170,205,215,0.13)" stroke-width="0.8"/><line x1="543.4" y1="531" x2="758.5" y2="531" stroke="rgba(170,205,215,0.13)" stroke-width="0.8"/><line x1="543.4" y1="546.1" x2="758.5" y2="546.1" stroke="rgba(170,205,215,0.13)" stroke-width="0.8"/><line x1="543.4" y1="561.2" x2="758.5" y2="561.2" stroke="rgba(170,205,215,0.13)" stroke-width="0.8"/><line x1="543.4" y1="576.3" x2="758.5" y2="576.3" stroke="rgba(170,205,215,0.13)" stroke-width="0.8"/><line x1="570.6" y1="500.8" x2="570.6" y2="576.3" stroke="rgba(170,205,215,0.13)" stroke-width="0.8"/><line x1="599.3" y1="500.8" x2="599.3" y2="576.3" stroke="rgba(170,205,215,0.13)" stroke-width="0.8"/><line x1="628.0" y1="500.8" x2="628.0" y2="576.3" stroke="rgba(170,205,215,0.13)" stroke-width="0.8"/><line x1="656.7" y1="500.8" x2="656.7" y2="576.3" stroke="rgba(170,205,215,0.13)" stroke-width="0.8"/><line x1="685.4" y1="500.8" x2="685.4" y2="576.3" stroke="rgba(170,205,215,0.13)" stroke-width="0.8"/><line x1="714.1" y1="500.8" x2="714.1" y2="576.3" stroke="rgba(170,205,215,0.13)" stroke-width="0.8"/><line x1="742.8" y1="500.8" x2="742.8" y2="576.3" stroke="rgba(170,205,215,0.13)" stroke-width="0.8"/><line x1="543.4" y1="512.5" x2="757" y2="512.5" stroke="#66b4c4" stroke-width="1.0"/><line x1="543.4" y1="525" x2="757" y2="525" stroke="#c68a48" stroke-width="1.0"/></svg><div class="t" style="left:541.10px;top:497.46px;font-size:6.4px;line-height:7.68px;color:#d8d9da;font-weight:normal;transform:translateX(-100%) scaleX(0.87);transform-origin:right center;">25</div><div class="t" style="left:541.10px;top:512.56px;font-size:6.4px;line-height:7.68px;color:#d8d9da;font-weight:normal;transform:translateX(-100%) scaleX(0.87);transform-origin:right center;">20</div><div class="t" style="left:541.10px;top:527.66px;font-size:6.4px;line-height:7.68px;color:#d8d9da;font-weight:normal;transform:translateX(-100%) scaleX(0.87);transform-origin:right center;">15</div><div class="t" style="left:541.10px;top:542.76px;font-size:6.4px;line-height:7.68px;color:#d8d9da;font-weight:normal;transform:translateX(-100%) scaleX(0.87);transform-origin:right center;">10</div><div class="t" style="left:541.10px;top:557.86px;font-size:6.4px;line-height:7.68px;color:#d8d9da;font-weight:normal;transform:translateX(-100%) scaleX(0.87);transform-origin:right center;">5</div><div class="t" style="left:541.10px;top:572.96px;font-size:6.4px;line-height:7.68px;color:#d8d9da;font-weight:normal;transform:translateX(-100%) scaleX(0.87);transform-origin:right center;">0</div><div class="t" style="left:570.60px;top:579.66px;font-size:6.4px;line-height:7.68px;color:#d8d9da;font-weight:normal;transform:translateX(-50%) scaleX(0.87);transform-origin:center center;">20:34</div><div class="t" style="left:599.30px;top:579.66px;font-size:6.4px;line-height:7.68px;color:#d8d9da;font-weight:normal;transform:translateX(-50%) scaleX(0.87);transform-origin:center center;">20:36</div><div class="t" style="left:628.00px;top:579.66px;font-size:6.4px;line-height:7.68px;color:#d8d9da;font-weight:normal;transform:translateX(-50%) scaleX(0.87);transform-origin:center center;">20:38</div><div class="t" style="left:656.70px;top:579.66px;font-size:6.4px;line-height:7.68px;color:#d8d9da;font-weight:normal;transform:translateX(-50%) scaleX(0.87);transform-origin:center center;">20:40</div><div class="t" style="left:685.40px;top:579.66px;font-size:6.4px;line-height:7.68px;color:#d8d9da;font-weight:normal;transform:translateX(-50%) scaleX(0.87);transform-origin:center center;">20:42</div><div class="t" style="left:714.10px;top:579.66px;font-size:6.4px;line-height:7.68px;color:#d8d9da;font-weight:normal;transform:translateX(-50%) scaleX(0.87);transform-origin:center center;">20:44</div><div class="t" style="left:742.80px;top:579.66px;font-size:6.4px;line-height:7.68px;color:#d8d9da;font-weight:normal;transform:translateX(-50%) scaleX(0.87);transform-origin:center center;">20:46</div><div class="r" style="left:776px;top:478px;width:240px;height:112px;background:#212124;box-sizing:border-box;border:1px solid #1c1d1f;"></div><div class="t" style="left:896.00px;top:481.82px;font-size:6.8px;line-height:8.16px;color:#d8d9da;font-weight:normal;transform:translateX(-50%) scaleX(0.95);transform-origin:center center;-webkit-text-stroke:0.25px #d8d9da;">Thread States</div><svg style="left:0;top:0" width="1024" height="576"><rect x="789.4" y="518.2" width="213.60000000000002" height="48.09999999999991" fill="#37322a"/><rect x="789.4" y="535.6" width="213.60000000000002" height="30.699999999999932" fill="#33312a"/><rect x="789.4" y="553.3" width="213.60000000000002" height="13.0" fill="#3e3429"/><line x1="789.4" y1="500.8" x2="1004.7" y2="500.8" stroke="rgba(170,205,215,0.13)" stroke-width="0.8"/><line x1="789.4" y1="522.6" x2="1004.7" y2="522.6" stroke="rgba(170,205,215,0.13)" stroke-width="0.8"/><line x1="789.4" y1="544.4" x2="1004.7" y2="544.4" stroke="rgba(170,205,215,0.13)" stroke-width="0.8"/><line x1="789.4" y1="566.3" x2="1004.7" y2="566.3" stroke="rgba(170,205,215,0.13)" stroke-width="0.8"/><line x1="816.3" y1="500.8" x2="816.3" y2="566.3" stroke="rgba(170,205,215,0.13)" stroke-width="0.8"/><line x1="845.0" y1="500.8" x2="845.0" y2="566.3" stroke="rgba(170,205,215,0.13)" stroke-width="0.8"/><line x1="873.7" y1="500.8" x2="873.7" y2="566.3" stroke="rgba(170,205,215,0.13)" stroke-width="0.8"/><line x1="902.4" y1="500.8" x2="902.4" y2="566.3" stroke="rgba(170,205,215,0.13)" stroke-width="0.8"/><line x1="931.1" y1="500.8" x2="931.1" y2="566.3" stroke="rgba(170,205,215,0.13)" stroke-width="0.8"/><line x1="959.8" y1="500.8" x2="959.8" y2="566.3" stroke="rgba(170,205,215,0.13)" stroke-width="0.8"/><line x1="988.5" y1="500.8" x2="988.5" y2="566.3" stroke="rgba(170,205,215,0.13)" stroke-width="0.8"/><line x1="789.4" y1="518.2" x2="1003" y2="518.2" stroke="#c4a65c" stroke-width="1.0"/><line x1="789.4" y1="535.6" x2="1003" y2="535.6" stroke="#6d6a52" stroke-width="0.7"/><line x1="789.4" y1="553.3" x2="1003" y2="553.3" stroke="#c68a48" stroke-width="0.8"/><line x1="789.4" y1="566.1" x2="1003" y2="566.1" stroke="#c4a65c" stroke-width="0.8"/></svg><div class="t" style="left:787.10px;top:497.46px;font-size:6.4px;line-height:7.68px;color:#d8d9da;font-weight:normal;transform:translateX(-100%) scaleX(0.87);transform-origin:right center;">15</div><div class="t" style="left:787.10px;top:519.26px;font-size:6.4px;line-height:7.68px;color:#d8d9da;font-weight:normal;transform:translateX(-100%) scaleX(0.87);transform-origin:right center;">10</div><div class="t" style="left:787.10px;top:541.06px;font-size:6.4px;line-height:7.68px;color:#d8d9da;font-weight:normal;transform:translateX(-100%) scaleX(0.87);transform-origin:right center;">5</div><div class="t" style="left:787.10px;top:562.96px;font-size:6.4px;line-height:7.68px;color:#d8d9da;font-weight:normal;transform:translateX(-100%) scaleX(0.87);transform-origin:right center;">0</div><div class="t" style="left:816.30px;top:569.06px;font-size:6.4px;line-height:7.68px;color:#d8d9da;font-weight:normal;transform:translateX(-50%) scaleX(0.87);transform-origin:center center;">20:34</div><div class="t" style="left:845.00px;top:569.06px;font-size:6.4px;line-height:7.68px;color:#d8d9da;font-weight:normal;transform:translateX(-50%) scaleX(0.87);transform-origin:center center;">20:36</div><div class="t" style="left:873.70px;top:569.06px;font-size:6.4px;line-height:7.68px;color:#d8d9da;font-weight:normal;transform:translateX(-50%) scaleX(0.87);transform-origin:center center;">20:38</div><div class="t" style="left:902.40px;top:569.06px;font-size:6.4px;line-height:7.68px;color:#d8d9da;font-weight:normal;transform:translateX(-50%) scaleX(0.87);transform-origin:center center;">20:40</div><div class="t" style="left:931.10px;top:569.06px;font-size:6.4px;line-height:7.68px;color:#d8d9da;font-weight:normal;transform:translateX(-50%) scaleX(0.87);transform-origin:center center;">20:42</div><div class="t" style="left:959.80px;top:569.06px;font-size:6.4px;line-height:7.68px;color:#d8d9da;font-weight:normal;transform:translateX(-50%) scaleX(0.87);transform-origin:center center;">20:44</div><div class="t" style="left:988.50px;top:569.06px;font-size:6.4px;line-height:7.68px;color:#d8d9da;font-weight:normal;transform:translateX(-50%) scaleX(0.87);transform-origin:center center;">20:46</div></body></html>
